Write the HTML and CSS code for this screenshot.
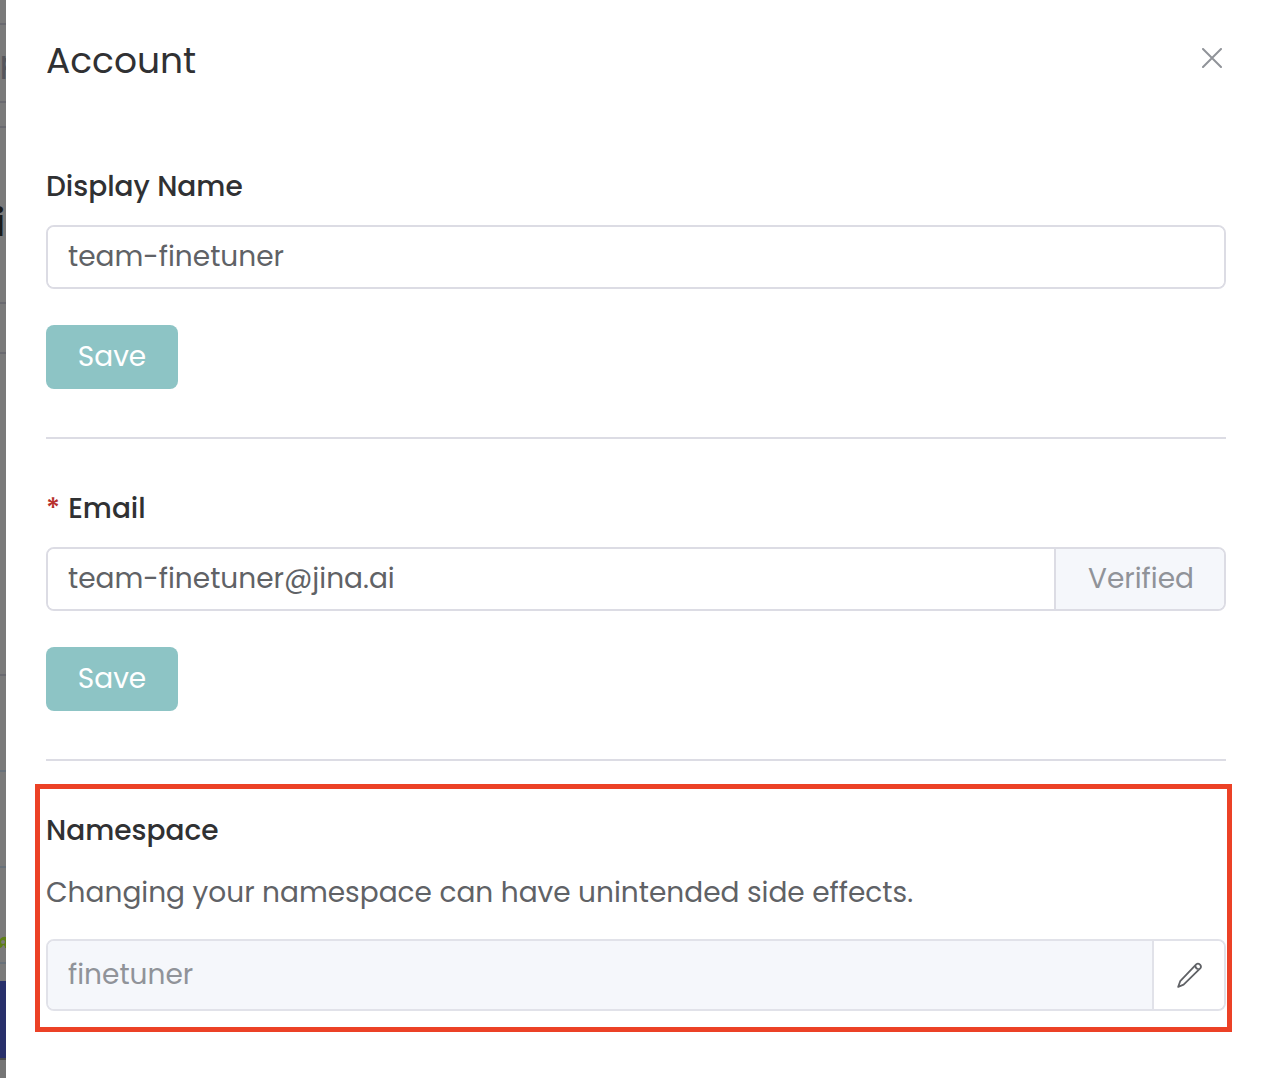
FILE: index.html
```html
<!DOCTYPE html>
<html lang="en">
<head>
<meta charset="utf-8">
<meta name="viewport" content="width=device-width, initial-scale=1">
<title>Account</title>
<link rel="stylesheet" href="styles.css">
</head>
<body>
<div class="layout">
  <div class="page" aria-hidden="true">
    <div class="page-row row-top"></div>
    <div class="page-row row-search"><span class="search-text">p</span></div>
    <div class="page-row row-top"></div>
    <div class="page-row row-title"><span class="title-text">i</span></div>
    <div class="page-row row-tabs"></div>
    <div class="page-row row-panel"></div>
    <div class="page-row row-item"></div>
    <div class="page-row row-item"></div>
    <div class="page-row row-item row-badge">
      <svg width="6" height="14" viewBox="0 0 6 14"><path d="M0 3Q3 0 6 1V12H5Q5 9 3 9Q2 12 0 12Z" fill="#5f7f16"/><circle cx="3" cy="6" r="2" fill="#7a7a7a"/></svg>
    </div>
    <div class="page-banner"></div>
    <div class="page-footer"></div>
  </div>
  <main class="drawer">
    <header class="drawer-header">
      <h1 class="title">Account</h1>
      <button class="close" type="button" aria-label="Close">
        <svg width="20" height="20" viewBox="0 0 20 20"><path d="M1 1L19 19M19 1L1 19" fill="none" stroke="#909399" stroke-width="2" stroke-linecap="round"/></svg>
      </button>
    </header>
    <form class="section">
      <label class="label" for="display-name">Display Name</label>
      <div class="field"><input class="input" id="display-name" type="text" value="team-finetuner"></div>
      <button class="save" type="button">Save</button>
    </form>
    <form class="section">
      <label class="label" for="email"><span class="required">*</span>Email</label>
      <div class="field">
        <input class="input" id="email" type="email" value="team-finetuner@jina.ai">
        <span class="addon">Verified</span>
      </div>
      <button class="save" type="button">Save</button>
    </form>
    <form class="section-highlight">
      <label class="label" for="namespace">Namespace</label>
      <p class="hint">Changing your namespace can have unintended side effects.</p>
      <div class="field field-disabled">
        <input class="input" id="namespace" type="text" value="finetuner" disabled>
        <button class="edit" type="button" aria-label="Edit namespace">
          <svg width="28" height="28" viewBox="0 0 28 28" fill="none" stroke="#606266" stroke-width="1.800" stroke-linejoin="round"><path d="M3.200 25.800L5.200 20.200L21.200 3.400Q23 1.800 25 3.600Q26.800 5.600 25.200 7.400L8.600 23.600ZM20.400 4.400Q20.500 8 24.200 8.200"/></svg>
        </button>
      </div>
    </form>
  </main>
</div>
</body>
</html>
```
FILE: styles.css
```css
* {
  box-sizing: border-box;
}

body {
  margin: 0;
  font-family: Poppins, Inter, sans-serif;
  font-size: 28px;
  line-height: 44px;
  color: #606266;
  background: #fff;
}

.layout {
  display: grid;
  grid-template-columns: 6px minmax(0, 1fr);
  min-height: 100vh;
}

/* Dimmed page behind the drawer */
.page {
  display: flex;
  flex-direction: column;
  overflow: hidden;
  background: #7a7a7a;
}

.page-row {
  display: flex;
  flex: none;
  border-bottom: 2px solid #6a6a70;
}

.row-top { height: 25px; }
.row-search { height: 78px; align-items: center; }
.row-title { height: 176px; align-items: center; padding-top: 18px; }
.row-tabs { height: 50px; }
.row-panel { height: 322px; }
.row-item { height: 96px; border-color: #68717a; }
.row-badge { align-items: flex-end; padding-bottom: 12px; }

.search-text {
  font-weight: 500;
  color: #55565c;
}

.title-text {
  margin-left: -6px;
  font-size: 36px;
  font-weight: 700;
  color: #1a1a1a;
}

.page-banner {
  flex: none;
  height: 77px;
  margin-top: 17px;
  background: #28306b;
}

.page-footer {
  flex: 1;
  border-top: 2px solid #4a4b4e;
  background: #757575;
}

.drawer {
  padding: 40px 38px 46px 40px;
}

.drawer-header {
  display: flex;
  justify-content: space-between;
  align-items: flex-start;
  height: 44px;
  margin-bottom: 81px;
}

.title {
  margin: 0;
  font-size: 36px;
  font-weight: 400;
  line-height: 42px;
  color: #303133;
}

.close {
  display: flex;
  align-items: center;
  padding: 8px 4px;
  border: 0;
  background: none;
}

.section {
  margin-bottom: 48px;
  padding-bottom: 48px;
  border-bottom: 2px solid #dcdce4;
}

.label {
  display: block;
  margin-bottom: 16px;
  font-weight: 500;
  color: #303133;
}

.required {
  margin-right: 8px;
  color: #b7302c;
}

.field {
  display: flex;
  height: 64px;
  overflow: hidden;
  border: 2px solid #dcdce4;
  border-radius: 8px;
}

.input {
  flex: 1;
  min-width: 0;
  padding: 0 20px;
  border: 0;
  font: inherit;
  color: #606266;
  background: #fff;
}

.addon {
  display: flex;
  align-items: center;
  padding: 0 30px 0 32px;
  border-left: 2px solid #dcdce4;
  color: #909399;
  background: #f5f7fb;
}

.save {
  width: 132px;
  height: 64px;
  margin-top: 36px;
  padding: 0;
  display: block;
  border: 0;
  border-radius: 8px;
  font: inherit;
  color: #fff;
  background: #8dc4c5;
}

.section-highlight {
  margin: -25px -6px 0 -11px;
  padding: 20px 1px 16px 6px;
  border: 5px solid #ec4126;
}

.section-highlight .label {
  margin-bottom: 18px;
}

.hint {
  margin: 0 0 24px;
}

.field-disabled {
  height: 72px;
  border-color: #e1e2e9;
}

.field-disabled .input {
  color: #909399;
  background: #f5f7fb;
}

.edit {
  display: flex;
  align-items: center;
  justify-content: center;
  width: 72px;
  padding: 0;
  border: 0;
  border-left: 2px solid #e1e2e9;
  background: #fff;
}
```
